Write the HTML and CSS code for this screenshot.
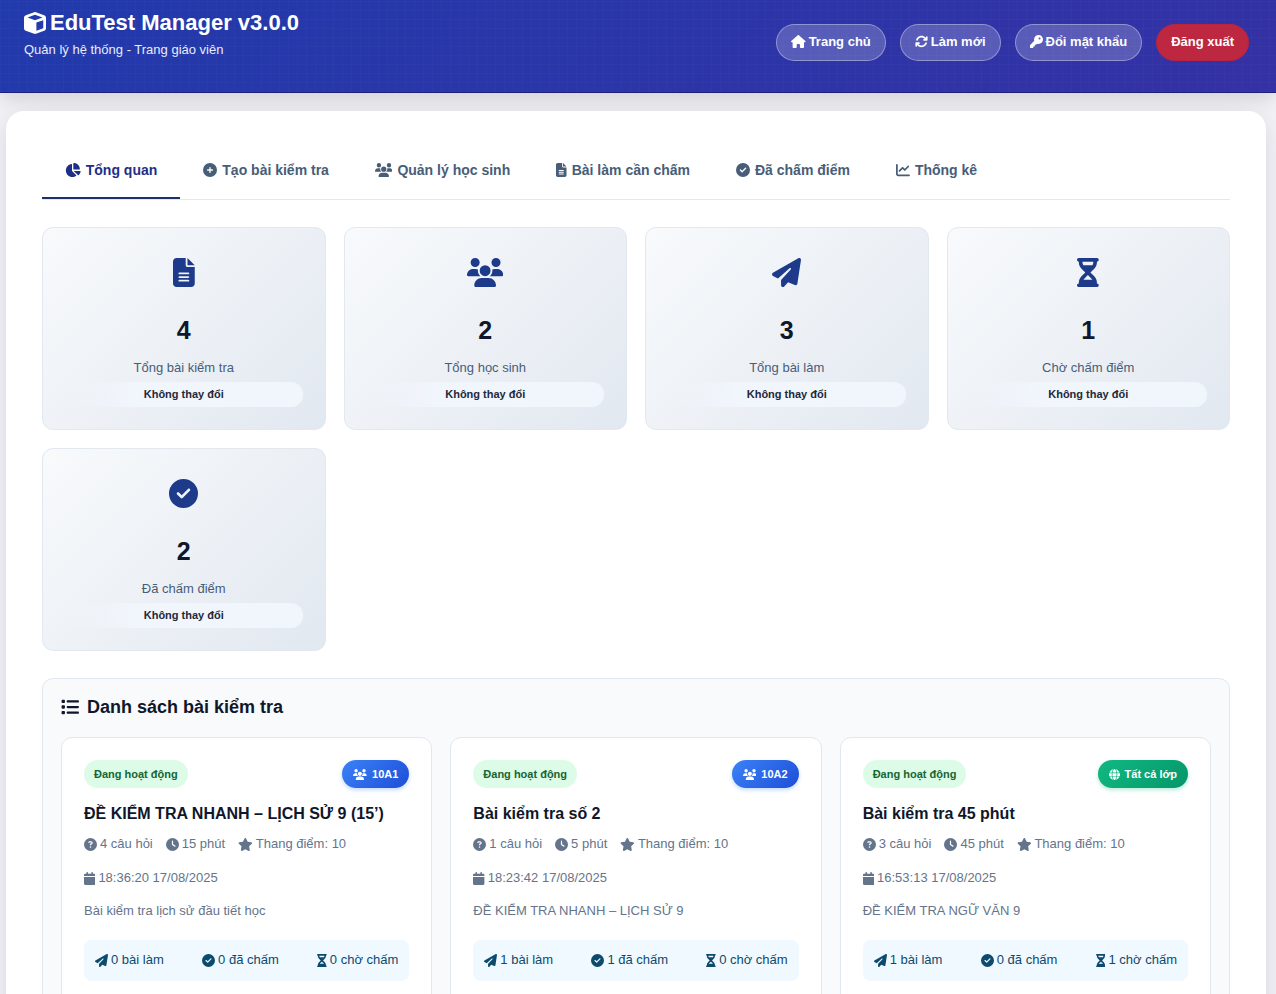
FILE: index.html
```html
<!DOCTYPE html>
<html lang="vi">
<head>
  <meta charset="UTF-8">
  <meta name="viewport" content="width=device-width, initial-scale=1.0">
  <title>EduTest Manager v3.0.0</title>
  <link rel="stylesheet" href="styles.css">
</head>
<body>
  <svg class="sprite" aria-hidden="true">
    <defs>
      <path id="i-cube" d="M234.5 5.7c13.9-5 29.1-5 43.1 0l192 68.6C495 83.4 512 107.5 512 134.6V377.4c0 27-17 51.2-42.5 60.3l-192 68.6c-13.9 5-29.1 5-43.1 0l-192-68.6C17 428.6 0 404.5 0 377.4V134.6c0-27 17-51.2 42.5-60.3l192-68.6zM256 66L82.3 128 256 190l173.7-62L256 66zm32 368.6l160-57.1v-188L288 246.6v188z"/>
      <path id="i-home" d="M575.8 255.5c0 18-15 32.1-32 32.1h-32l.7 160.2c0 2.7-.2 5.4-.5 8.1V472c0 22.1-17.9 40-40 40H456c-1.1 0-2.2 0-3.3-.1c-1.4 .1-2.8 .1-4.2 .1H416 392c-22.1 0-40-17.9-40-40V448 384c0-17.7-14.3-32-32-32H256c-17.7 0-32 14.3-32 32v64 24c0 22.1-17.9 40-40 40H160 128.1c-1.5 0-3-.1-4.5-.2c-1.2 .1-2.4 .2-3.6 .2H104c-22.1 0-40-17.9-40-40V360c0-.9 0-1.9 .1-2.8V287.6H32c-18 0-32-14-32-32.1c0-9 3-17 10-24L266.4 8c7-7 15-8 22-8s15 2 21 7L564.8 231.5c8 7 12 15 11 24z"/>
      <path id="i-sync" d="M105.1 202.6c7.7-21.8 20.2-42.3 37.8-59.8c62.5-62.5 163.8-62.5 226.3 0L386.3 160H352c-17.7 0-32 14.3-32 32s14.3 32 32 32H463.5c0 0 0 0 0 0h.4c17.7 0 32-14.3 32-32V80c0-17.7-14.3-32-32-32s-32 14.3-32 32v35.2L414.4 97.6c-87.5-87.5-229.3-87.5-316.8 0C73.2 122 55.6 150.7 44.8 181.4c-5.9 16.7 2.9 34.9 19.5 40.8s34.9-2.9 40.8-19.5zM39 289.3c-5 1.5-9.8 4.2-13.7 8.2c-4 4-6.7 8.8-8.1 14c-.3 1.2-.6 2.5-.8 3.8c-.3 1.7-.4 3.4-.4 5.1V432c0 17.7 14.3 32 32 32s32-14.3 32-32V396.9l17.6 17.5 0 0c87.5 87.4 229.3 87.4 316.7 0c24.4-24.4 42.1-53.1 52.9-83.7c5.9-16.7-2.9-34.9-19.5-40.8s-34.9 2.9-40.8 19.5c-7.7 21.8-20.2 42.3-37.8 59.8c-62.5 62.5-163.8 62.5-226.3 0l-.1-.1L125.6 352H160c17.7 0 32-14.3 32-32s-14.3-32-32-32H48.4c-1.6 0-3.2 .1-4.8 .3s-3.1 .5-4.6 1z"/>
      <path id="i-key" d="M336 352c97.2 0 176-78.8 176-176S433.2 0 336 0S160 78.8 160 176c0 18.7 2.9 36.8 8.3 53.7L7 391c-4.5 4.5-7 10.6-7 17v80c0 13.3 10.7 24 24 24h80c13.3 0 24-10.7 24-24V448h40c13.3 0 24-10.7 24-24V384h40c6.4 0 12.5-2.5 17-7l33.3-33.3c16.9 5.4 35 8.3 53.7 8.3zM376 96a40 40 0 1 1 0 80 40 40 0 1 1 0-80z"/>
      <path id="i-pie" d="M304 240V16.6c0-9 7-16.6 16-16.6C443.7 0 544 100.3 544 224c0 9-7.6 16-16.6 16H304zM32 272C32 150.7 122.1 50.3 239 34.3c9.2-1.3 17 6.1 17 15.4V288L412.5 444.5c6.7 6.7 6.2 17.7-1.5 23.1C371.8 495.6 323.8 512 272 512C139.5 512 32 404.6 32 272zm526.4 16c9.3 0 16.6 7.8 15.4 17c-7.7 55.9-34.6 105.6-73.9 142.3c-6 5.6-15.4 5.2-21.2-.7L320 288H558.4z"/>
      <path id="i-plus" d="M256 512A256 256 0 1 0 256 0a256 256 0 1 0 0 512zM232 344V280H168c-13.3 0-24-10.7-24-24s10.7-24 24-24h64V168c0-13.3 10.7-24 24-24s24 10.7 24 24v64h64c13.3 0 24 10.7 24 24s-10.7 24-24 24H280v64c0 13.3-10.7 24-24 24s-24-10.7-24-24z"/>
      <path id="i-check" d="M256 512A256 256 0 1 0 256 0a256 256 0 1 0 0 512zM369 209L241 337c-9.4 9.4-24.6 9.4-33.9 0l-64-64c-9.4-9.4-9.4-24.6 0-33.9s24.6-9.4 33.9 0l47 47L335 175c9.4-9.4 24.6-9.4 33.9 0s9.4 24.6 0 33.9z"/>
      <path id="i-file" d="M64 0C28.7 0 0 28.7 0 64V448c0 35.3 28.7 64 64 64H320c35.3 0 64-28.7 64-64V160H256c-17.7 0-32-14.3-32-32V0H64zM256 0V128H384L256 0zM112 256H272c8.8 0 16 7.2 16 16s-7.2 16-16 16H112c-8.8 0-16-7.2-16-16s7.2-16 16-16zm0 64H272c8.8 0 16 7.2 16 16s-7.2 16-16 16H112c-8.8 0-16-7.2-16-16s7.2-16 16-16zm0 64H272c8.8 0 16 7.2 16 16s-7.2 16-16 16H112c-8.8 0-16-7.2-16-16s7.2-16 16-16z"/>
      <path id="i-users" d="M144 0a80 80 0 1 1 0 160A80 80 0 1 1 144 0zM512 0a80 80 0 1 1 0 160A80 80 0 1 1 512 0zM0 298.7C0 239.8 47.8 192 106.7 192h42.7c15.9 0 31 3.5 44.6 9.7c-1.3 7.2-1.9 14.7-1.9 22.3c0 38.2 16.8 72.5 43.3 96c-.2 0-.4 0-.7 0H21.3C9.6 320 0 310.4 0 298.7zM405.3 320c-.2 0-.4 0-.7 0c26.6-23.5 43.3-57.8 43.3-96c0-7.6-.7-15-1.9-22.3c13.6-6.3 28.7-9.7 44.6-9.7h42.7C592.2 192 640 239.8 640 298.7c0 11.8-9.6 21.3-21.3 21.3H405.3zM224 224a96 96 0 1 1 192 0 96 96 0 1 1 -192 0zM128 485.3C128 411.7 187.7 352 261.3 352H378.7C452.3 352 512 411.7 512 485.3c0 14.7-11.9 26.7-26.7 26.7H154.7c-14.7 0-26.7-11.9-26.7-26.7z"/>
      <path id="i-chart" d="M64 64c0-17.7-14.3-32-32-32S0 46.3 0 64V400c0 44.2 35.8 80 80 80H480c17.7 0 32-14.3 32-32s-14.3-32-32-32H80c-8.8 0-16-7.2-16-16V64zm406.6 86.6c12.5-12.5 12.5-32.8 0-45.3s-32.8-12.5-45.3 0L320 210.7l-57.4-57.4c-12.5-12.5-32.8-12.5-45.3 0l-112 112c-12.5 12.5-12.5 32.8 0 45.3s32.8 12.5 45.3 0L240 221.3l57.4 57.4c12.5 12.5 32.8 12.5 45.3 0l128-128z"/>
      <path id="i-plane" d="M498.1 5.6c10.1 7 15.4 19.1 13.5 31.2l-64 416c-1.5 9.7-7.4 18.2-16 23s-18.9 5.4-28 1.6L284 427.7l-68.5 74.1c-8.9 9.7-22.9 12.9-35.2 8.1S160 493.2 160 480V396.4c0-4 1.5-7.8 4.2-10.7L331.8 202.8c5.8-6.3 5.6-16-.4-22s-15.7-6.4-22-.7L106 360.8 17.7 316.6C7.1 311.3 .3 300.7 0 288.9s5.9-22.8 16.1-28.7l448-256c10.7-6.1 23.9-5.5 34 1.4z"/>
      <path id="i-hourglass" d="M32 0C14.3 0 0 14.3 0 32S14.3 64 32 64V75c0 42.4 16.9 83.1 46.9 113.1L146.7 256 78.9 323.9C48.9 353.9 32 394.6 32 437v11c-17.7 0-32 14.3-32 32s14.3 32 32 32H64 320h32c17.7 0 32-14.3 32-32s-14.3-32-32-32V437c0-42.4-16.9-83.1-46.9-113.1L237.3 256l67.9-67.9c30-30 46.9-70.7 46.9-113.1V64c17.7 0 32-14.3 32-32s-14.3-32-32-32H320 64 32zM96 75V64H288V75c0 19-5.6 37.4-16 53H112c-10.3-15.6-16-34-16-53zm16 309c3.5-5.3 7.6-10.3 12.1-14.9L192 301.3l67.9 67.9c4.6 4.6 8.6 9.6 12.1 14.9H112z"/>
      <path id="i-list" d="M40 48C26.7 48 16 58.7 16 72v48c0 13.3 10.7 24 24 24H88c13.3 0 24-10.7 24-24V72c0-13.3-10.7-24-24-24H40zM192 64c-17.7 0-32 14.3-32 32s14.3 32 32 32H480c17.7 0 32-14.3 32-32s-14.3-32-32-32H192zm0 160c-17.7 0-32 14.3-32 32s14.3 32 32 32H480c17.7 0 32-14.3 32-32s-14.3-32-32-32H192zm0 160c-17.7 0-32 14.3-32 32s14.3 32 32 32H480c17.7 0 32-14.3 32-32s-14.3-32-32-32H192zM16 232v48c0 13.3 10.7 24 24 24H88c13.3 0 24-10.7 24-24V232c0-13.3-10.7-24-24-24H40c-13.3 0-24 10.7-24 24zM40 368c-13.3 0-24 10.7-24 24v48c0 13.3 10.7 24 24 24H88c13.3 0 24-10.7 24-24V392c0-13.3-10.7-24-24-24H40z"/>
      <path id="i-question" d="M256 512A256 256 0 1 0 256 0a256 256 0 1 0 0 512zM169.8 165.3c7.9-22.3 29.1-37.3 52.8-37.3h58.3c34.9 0 63.1 28.3 63.1 63.1c0 22.6-12.1 43.5-31.7 54.8L280 264.4c-.2 13-10.9 23.6-24 23.6c-13.3 0-24-10.7-24-24V250.5c0-8.6 4.6-16.5 12.1-20.8l44.3-25.4c4.7-2.7 7.6-7.7 7.6-13.1c0-8.4-6.8-15.1-15.1-15.1H222.6c-3.4 0-6.4 2.1-7.5 5.3l-.4 1.2c-4.4 12.5-18.2 19-30.6 14.6s-19-18.2-14.6-30.6l.4-1.2zM224 352a32 32 0 1 1 64 0 32 32 0 1 1 -64 0z"/>
      <path id="i-clock" d="M256 0a256 256 0 1 1 0 512A256 256 0 1 1 256 0zM232 120V256c0 8 4 15.5 10.7 20l96 64c11 7.4 25.9 4.4 33.3-6.7s4.4-25.9-6.7-33.3L280 243.2V120c0-13.3-10.7-24-24-24s-24 10.7-24 24z"/>
      <path id="i-star" d="M316.9 18C311.6 7 300.4 0 288.1 0s-23.4 7-28.8 18L195 150.3 51.4 171.5c-12 1.8-22 10.2-25.7 21.7s-.7 24.2 7.9 32.7L137.8 329 113.2 474.7c-2 12 3 24.2 12.9 31.3s23 8 33.8 2.3l128.3-68.5 128.3 68.5c10.8 5.7 23.9 4.9 33.8-2.3s14.9-19.3 12.9-31.3L438.5 329 542.7 225.9c8.6-8.5 11.7-21.2 7.9-32.7s-13.7-19.9-25.7-21.7L381.2 150.3 316.9 18z"/>
      <path id="i-calendar" d="M96 32V64H48C21.5 64 0 85.5 0 112v48H448V112c0-26.5-21.5-48-48-48H352V32c0-17.7-14.3-32-32-32s-32 14.3-32 32V64H160V32c0-17.7-14.3-32-32-32S96 14.3 96 32zM448 192H0V464c0 26.5 21.5 48 48 48H400c26.5 0 48-21.5 48-48V192z"/>
      <path id="i-globe" d="M352 256c0 22.2-1.2 43.6-3.3 64H163.3c-2.2-20.4-3.3-41.8-3.3-64s1.2-43.6 3.3-64H348.7c2.2 20.4 3.3 41.8 3.3 64zm28.8-64H503.9c5.3 20.5 8.1 41.9 8.1 64s-2.8 43.5-8.1 64H380.8c2.1-20.6 3.2-42 3.2-64s-1.1-43.4-3.2-64zm112.6-32H376.7c-10-63.9-29.8-117.4-55.3-151.6c78.3 20.7 142 77.5 171.9 151.6zm-149.1 0H167.7c6.1-36.4 15.5-68.6 27-94.7c10.5-23.6 22.2-40.7 33.5-51.5C239.4 3.2 248.7 0 256 0s16.6 3.2 27.8 13.8c11.3 10.8 23 27.9 33.5 51.5c11.6 26 20.9 58.2 27 94.7zm-209 0H18.6C48.6 85.9 112.2 29.1 190.6 8.4C165.1 42.6 145.3 96.1 135.3 160zM8.1 192H131.2c-2.1 20.6-3.2 42-3.2 64s1.1 43.4 3.2 64H8.1C2.8 299.5 0 278.1 0 256s2.8-43.5 8.1-64zM194.7 446.6c-11.6-26-20.9-58.2-27-94.6H344.3c-6.1 36.4-15.5 68.6-27 94.6c-10.5 23.6-22.2 40.7-33.5 51.5C272.6 508.8 263.3 512 256 512s-16.6-3.2-27.8-13.8c-11.3-10.8-23-27.9-33.5-51.5zM135.3 352c10 63.9 29.8 117.4 55.3 151.6C112.2 482.9 48.6 426.1 18.6 352H135.3zm358.1 0c-30 74.1-93.6 130.9-171.9 151.6c25.5-34.2 45.2-87.7 55.3-151.6H493.4z"/>
    </defs>
  </svg>

  <header class="header">
    <div class="brand">
      <h1><svg class="icon" viewBox="0 0 512 512"><use href="#i-cube"/></svg>EduTest Manager v3.0.0</h1>
      <p>Quản lý hệ thống - Trang giáo viên</p>
    </div>
    <div class="header-actions">
      <a href="#" class="btn"><svg class="icon" viewBox="0 0 576 512"><use href="#i-home"/></svg>Trang chủ</a>
      <button type="button" class="btn"><svg class="icon" viewBox="0 0 512 512"><use href="#i-sync"/></svg>Làm mới</button>
      <button type="button" class="btn"><svg class="icon" viewBox="0 0 512 512"><use href="#i-key"/></svg>Đổi mật khẩu</button>
      <button type="button" class="btn btn-logout">Đăng xuất</button>
    </div>
  </header>

  <main class="container">
    <nav class="tabs">
      <button type="button" class="tab active"><svg class="icon" viewBox="0 0 576 512"><use href="#i-pie"/></svg>Tổng quan</button>
      <button type="button" class="tab"><svg class="icon" viewBox="0 0 512 512"><use href="#i-plus"/></svg>Tạo bài kiểm tra</button>
      <button type="button" class="tab"><svg class="icon" viewBox="0 0 640 512"><use href="#i-users"/></svg>Quản lý học sinh</button>
      <button type="button" class="tab"><svg class="icon" viewBox="0 0 384 512"><use href="#i-file"/></svg>Bài làm cần chấm</button>
      <button type="button" class="tab"><svg class="icon" viewBox="0 0 512 512"><use href="#i-check"/></svg>Đã chấm điểm</button>
      <button type="button" class="tab"><svg class="icon" viewBox="0 0 512 512"><use href="#i-chart"/></svg>Thống kê</button>
    </nav>

    <section class="stats-grid">
      <div class="stat-card">
        <svg class="icon" viewBox="0 0 384 512"><use href="#i-file"/></svg>
        <div class="stat-number">4</div>
        <div class="stat-label">Tổng bài kiểm tra</div>
        <div class="stat-change">Không thay đổi</div>
      </div>
      <div class="stat-card">
        <svg class="icon" viewBox="0 0 640 512"><use href="#i-users"/></svg>
        <div class="stat-number">2</div>
        <div class="stat-label">Tổng học sinh</div>
        <div class="stat-change">Không thay đổi</div>
      </div>
      <div class="stat-card">
        <svg class="icon" viewBox="0 0 512 512"><use href="#i-plane"/></svg>
        <div class="stat-number">3</div>
        <div class="stat-label">Tổng bài làm</div>
        <div class="stat-change">Không thay đổi</div>
      </div>
      <div class="stat-card">
        <svg class="icon" viewBox="0 0 384 512"><use href="#i-hourglass"/></svg>
        <div class="stat-number">1</div>
        <div class="stat-label">Chờ chấm điểm</div>
        <div class="stat-change">Không thay đổi</div>
      </div>
      <div class="stat-card">
        <svg class="icon" viewBox="0 0 512 512"><use href="#i-check"/></svg>
        <div class="stat-number">2</div>
        <div class="stat-label">Đã chấm điểm</div>
        <div class="stat-change">Không thay đổi</div>
      </div>
    </section>

    <section class="test-list">
      <h2><svg class="icon" viewBox="0 0 512 512"><use href="#i-list"/></svg>Danh sách bài kiểm tra</h2>
      <div class="test-grid">
        <article class="test-card">
          <div class="test-head">
            <span class="status">Đang hoạt động</span>
            <span class="class-badge"><svg class="icon" viewBox="0 0 640 512"><use href="#i-users"/></svg>10A1</span>
          </div>
          <h3>ĐỀ KIỂM TRA NHANH – LỊCH SỬ 9 (15’)</h3>
          <div class="test-meta">
            <span><svg class="icon" viewBox="0 0 512 512"><use href="#i-question"/></svg>4 câu hỏi</span>
            <span><svg class="icon" viewBox="0 0 512 512"><use href="#i-clock"/></svg>15 phút</span>
            <span><svg class="icon" viewBox="0 0 576 512"><use href="#i-star"/></svg>Thang điểm: 10</span>
            <span><svg class="icon" viewBox="0 0 448 512"><use href="#i-calendar"/></svg>18:36:20 17/08/2025</span>
          </div>
          <p class="test-desc">Bài kiểm tra lịch sử đầu tiết học</p>
          <div class="test-stats">
            <span><svg class="icon" viewBox="0 0 512 512"><use href="#i-plane"/></svg>0 bài làm</span>
            <span><svg class="icon" viewBox="0 0 512 512"><use href="#i-check"/></svg>0 đã chấm</span>
            <span><svg class="icon" viewBox="0 0 384 512"><use href="#i-hourglass"/></svg>0 chờ chấm</span>
          </div>
        </article>

        <article class="test-card">
          <div class="test-head">
            <span class="status">Đang hoạt động</span>
            <span class="class-badge"><svg class="icon" viewBox="0 0 640 512"><use href="#i-users"/></svg>10A2</span>
          </div>
          <h3>Bài kiểm tra số 2</h3>
          <div class="test-meta">
            <span><svg class="icon" viewBox="0 0 512 512"><use href="#i-question"/></svg>1 câu hỏi</span>
            <span><svg class="icon" viewBox="0 0 512 512"><use href="#i-clock"/></svg>5 phút</span>
            <span><svg class="icon" viewBox="0 0 576 512"><use href="#i-star"/></svg>Thang điểm: 10</span>
            <span><svg class="icon" viewBox="0 0 448 512"><use href="#i-calendar"/></svg>18:23:42 17/08/2025</span>
          </div>
          <p class="test-desc">ĐỀ KIỂM TRA NHANH – LỊCH SỬ 9</p>
          <div class="test-stats">
            <span><svg class="icon" viewBox="0 0 512 512"><use href="#i-plane"/></svg>1 bài làm</span>
            <span><svg class="icon" viewBox="0 0 512 512"><use href="#i-check"/></svg>1 đã chấm</span>
            <span><svg class="icon" viewBox="0 0 384 512"><use href="#i-hourglass"/></svg>0 chờ chấm</span>
          </div>
        </article>

        <article class="test-card">
          <div class="test-head">
            <span class="status">Đang hoạt động</span>
            <span class="class-badge all"><svg class="icon" viewBox="0 0 512 512"><use href="#i-globe"/></svg>Tất cả lớp</span>
          </div>
          <h3>Bài kiểm tra 45 phút</h3>
          <div class="test-meta">
            <span><svg class="icon" viewBox="0 0 512 512"><use href="#i-question"/></svg>3 câu hỏi</span>
            <span><svg class="icon" viewBox="0 0 512 512"><use href="#i-clock"/></svg>45 phút</span>
            <span><svg class="icon" viewBox="0 0 576 512"><use href="#i-star"/></svg>Thang điểm: 10</span>
            <span><svg class="icon" viewBox="0 0 448 512"><use href="#i-calendar"/></svg>16:53:13 17/08/2025</span>
          </div>
          <p class="test-desc">ĐỀ KIỂM TRA NGỮ VĂN 9</p>
          <div class="test-stats">
            <span><svg class="icon" viewBox="0 0 512 512"><use href="#i-plane"/></svg>1 bài làm</span>
            <span><svg class="icon" viewBox="0 0 512 512"><use href="#i-check"/></svg>0 đã chấm</span>
            <span><svg class="icon" viewBox="0 0 384 512"><use href="#i-hourglass"/></svg>1 chờ chấm</span>
          </div>
        </article>
      </div>
    </section>
  </main>
</body>
</html>
```

FILE: styles.css
```css
* {
  margin: 0;
  padding: 0;
  box-sizing: border-box;
}

body {
  font-family: "Liberation Sans", Arial, sans-serif;
  font-size: 13px;
  line-height: 20px;
  color: #0f172a;
  background: #f3f3f7;
}

button {
  font-family: inherit;
  cursor: pointer;
}

.sprite {
  display: none;
}

.icon {
  height: 1em;
  width: auto;
  fill: currentColor;
  flex-shrink: 0;
}

/* Header */
.header {
  display: flex;
  justify-content: space-between;
  align-items: flex-start;
  padding: 10px 27px 31px 24px;
  color: #fff;
  background:
    repeating-linear-gradient(90deg, rgba(255, 255, 255, 0.02) 0 1px, transparent 1px 9px),
    repeating-linear-gradient(0deg, rgba(255, 255, 255, 0.02) 0 1px, transparent 1px 9px),
    linear-gradient(135deg, #213aac, #3431a4);
  border-bottom: 1px solid #1e1f7a;
  box-shadow: 0 4px 18px rgba(0, 0, 0, 0.15);
}

.brand h1 {
  display: flex;
  align-items: center;
  gap: 4px;
  font-size: 22px;
  line-height: 26px;
}

.brand p {
  margin-top: 4px;
  color: #e8ecfb;
}

.header-actions {
  display: flex;
  gap: 14px;
  margin-top: 14px;
}

.btn {
  display: flex;
  align-items: center;
  gap: 3px;
  height: 37px;
  padding: 0 14px 2px;
  font-size: 13px;
  font-weight: bold;
  color: #fff;
  text-decoration: none;
  background: rgba(255, 255, 255, 0.2);
  border: 1px solid rgba(255, 255, 255, 0.35);
  border-radius: 19px;
}

.btn-logout {
  background: #bd2740;
  border-color: #b92440;
}

/* Content */
.container {
  margin: 18px 10px 0 6px;
  padding: 32px 36px 36px;
  background: #fff;
  border-radius: 18px;
  box-shadow: 0 4px 28px rgba(30, 20, 60, 0.12);
}

.tabs {
  display: flex;
  margin-bottom: 27px;
  border-bottom: 1px solid #e2e8f0;
}

.tab {
  display: flex;
  align-items: center;
  gap: 5px;
  height: 56px;
  padding: 0 23px;
  font-size: 14px;
  font-weight: bold;
  color: #475d78;
  background: none;
  border: none;
  border-bottom: 2px solid transparent;
}

.tab.active {
  color: #1e2f8a;
  border-bottom-color: #1e2f6e;
}

.stats-grid {
  display: grid;
  grid-template-columns: repeat(auto-fit, minmax(240px, 1fr));
  gap: 18px;
  margin-bottom: 27px;
}

.stat-card {
  display: flex;
  flex-direction: column;
  align-items: center;
  padding: 30px 22px 22px;
  background: linear-gradient(135deg, #f8fafc, #e2e8f0);
  border: 1px solid #e2e8f0;
  border-radius: 11px;
}

.stat-card .icon {
  height: 29px;
  color: #1e3a8a;
}

.stat-number {
  margin-top: 28px;
  font-size: 25px;
  font-weight: bold;
  line-height: 30px;
}

.stat-label {
  margin: 13px 0 4px;
  color: #475d78;
}

.stat-change {
  width: 100%;
  font-size: 11px;
  font-weight: bold;
  line-height: 25px;
  text-align: center;
  color: #1e293b;
  background: linear-gradient(90deg, rgba(241, 245, 252, 0), #f1f5fc 30%);
  border-radius: 12px;
}

/* Test list */
.test-list {
  padding: 18px;
  background: #f8fafc;
  border: 1px solid #e2e8f0;
  border-radius: 11px;
}

.test-list h2 {
  display: flex;
  align-items: center;
  gap: 8px;
  margin-bottom: 20px;
  font-size: 18px;
  line-height: 20px;
}

.test-grid {
  display: grid;
  grid-template-columns: repeat(auto-fit, minmax(320px, 1fr));
  gap: 18px;
}

.test-card {
  padding: 22px 22px 40px;
  background: #fff;
  border: 1px solid #e2e8f0;
  border-radius: 11px;
}

.test-head {
  display: flex;
  justify-content: space-between;
  margin-bottom: 16px;
  font-size: 11px;
  font-weight: bold;
  line-height: 28px;
}

.status {
  padding: 0 10px;
  color: #166534;
  background: #dcfce7;
  border-radius: 14px;
}

.class-badge {
  display: flex;
  align-items: center;
  gap: 5px;
  padding: 0 11px;
  color: #fff;
  background: linear-gradient(135deg, #3b82f6, #1d4ed8);
  border-radius: 14px;
  box-shadow: 0 2px 4px rgba(59, 130, 246, 0.3);
}

.class-badge.all {
  background: linear-gradient(135deg, #10b981, #059669);
  box-shadow: 0 2px 4px rgba(16, 185, 129, 0.3);
}

.test-card h3 {
  margin-bottom: 10px;
  font-size: 16px;
  line-height: 20px;
}

.test-meta {
  display: flex;
  flex-wrap: wrap;
  gap: 14px 13px;
  margin-bottom: 13px;
  color: #64748b;
}

.test-meta span,
.test-stats span {
  display: flex;
  align-items: center;
  gap: 3px;
}

.test-desc {
  margin-bottom: 19px;
  color: #64748b;
}

.test-stats {
  display: flex;
  justify-content: space-between;
  padding: 10px 11px 11px;
  color: #0c4a6e;
  background: #f0f9ff;
  border-radius: 8px;
}
```
